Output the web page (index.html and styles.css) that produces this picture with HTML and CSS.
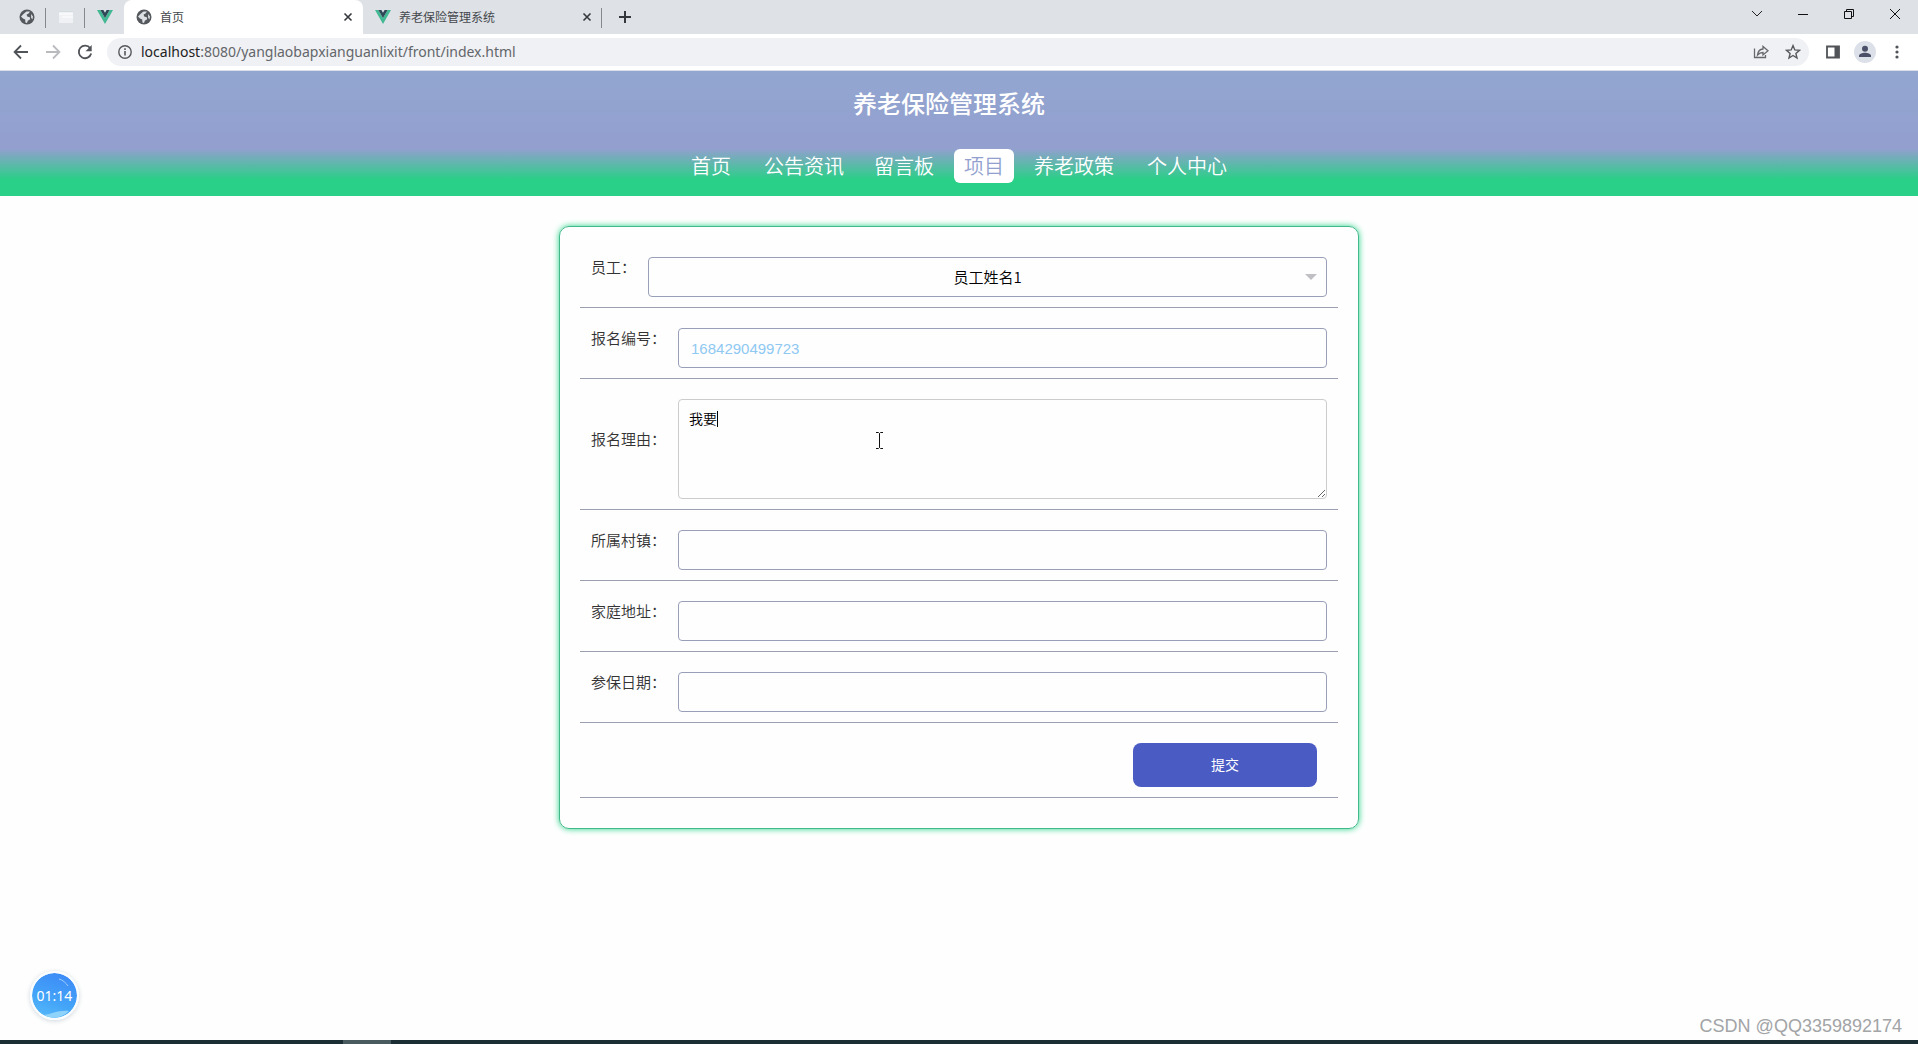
FILE: index.html
```html
<!DOCTYPE html>
<html lang="zh-CN">
<head>
<meta charset="utf-8">
<meta name="viewport" content="width=device-width, initial-scale=1">
<title>首页</title>
<link rel="stylesheet" href="styles.css">
</head>
<body>
<svg class="symbols" aria-hidden="true">
  <symbol id="globe" viewBox="0 0 16 16"><circle cx="8" cy="8" r="7.5" fill="#55585c"/><path d="M2 7.5 5 4.5 7.5 2.4 11 2.4 9.6 4.6 7.6 5.6 8.2 7.4 10.8 8.2 11.2 10.2 8.8 11.8 8 14 6.4 13.6 6.2 10.6 4 9.6Z" fill="#dee1e6"/><path d="m12 5 2 2.5-.6 3-1.2-1.8Z" fill="#dee1e6"/></symbol>
  <symbol id="vue" viewBox="0 0 16 16"><path d="M0 1h3.4L8 9l4.6-8H16L8 15Z" fill="#42b893"/><path d="M3.4 1H6.4L8 3.8 9.6 1h3L8 9Z" fill="#2f4858"/></symbol>
  <symbol id="cross" viewBox="0 0 10 10"><path d="m1.5 1.5 7 7m0-7-7 7" stroke="#34373b" stroke-width="1.6" fill="none"/></symbol>
</svg>

<header class="browser">
  <div class="tabstrip">
    <div class="pinned"><svg width="16" height="16"><use href="#globe"/></svg></div>
    <div class="pinned"><svg width="16" height="16" viewBox="0 0 16 16"><path d="M1 2h14v12H1z" fill="#eff1f4"/><path d="M1 5h14M4 8h11" stroke="#fff"/><path d="M1 2.500h14" stroke="#d3dcdf"/></svg></div>
    <div class="pinned last"><svg width="16" height="16"><use href="#vue"/></svg></div>
    <div class="tab active">
      <svg width="16" height="16"><use href="#globe"/></svg><span>首页</span>
      <button class="close" aria-label="关闭标签页"><svg width="10" height="10"><use href="#cross"/></svg></button>
    </div>
    <div class="tab">
      <svg width="16" height="16"><use href="#vue"/></svg><span>养老保险管理系统</span>
      <button class="close" aria-label="关闭标签页"><svg width="10" height="10"><use href="#cross"/></svg></button>
    </div>
    <button class="plus" aria-label="新标签页"><svg width="14" height="14"><path d="M7 1v12M1 7h12" stroke="#34373b" stroke-width="2"/></svg></button>
    <div class="window-controls">
      <button aria-label="搜索标签页"><svg width="12" height="12" fill="none" stroke="#222"><path d="m1 3 5 5 5-5"/></svg></button>
      <button aria-label="最小化"><svg width="12" height="12"><path d="M1 6.500h10" stroke="#111"/></svg></button>
      <button aria-label="还原"><svg width="12" height="12" fill="none" stroke="#111"><path d="M1.500 3.500h7v7h-7zM3.500 3.500v-2h7v7h-2"/></svg></button>
      <button aria-label="关闭"><svg width="12" height="12"><path d="m1 1 10 10M11 1 1 11" stroke="#111"/></svg></button>
    </div>
  </div>
  <div class="toolbar">
    <button class="tool" aria-label="后退"><svg width="16" height="16" fill="none" stroke="#505357" stroke-width="1.800"><path d="M15 8H2M8 1.500 1.600 8 8 14.500"/></svg></button>
    <button class="tool" aria-label="前进"><svg width="16" height="16" fill="none" stroke="#b9bbbe" stroke-width="1.800"><path d="M1 8h13M8 1.500 14.400 8 8 14.500"/></svg></button>
    <button class="tool" aria-label="刷新"><svg width="16" height="16"><path d="M13.200 4.200A6.300 6.300 0 1 0 14.200 9.500" fill="none" stroke="#505357" stroke-width="1.800"/><path d="M14.700 1v6.200H8.500Z" fill="#505357"/></svg></button>
    <div class="address">
      <svg width="16" height="16"><circle cx="8" cy="8" r="6.200" fill="none" stroke="#55585c" stroke-width="1.400"/><path d="M8 7v4.500M8 4.300v1.700" stroke="#55585c" stroke-width="1.600"/></svg>
      <span class="url"><b>localhost</b>:8080/yanglaobapxianguanlixit/front/index.html</span>
      <button class="tool" aria-label="分享"><svg width="16" height="16" fill="none" stroke="#65686c" stroke-width="1.300"><path d="M1.500 4.500v9h11v-2.500M4.500 11c.5-4 2.500-5.800 5.500-6V2.500l5 4.200-5 4.200V8.500C7.500 8.500 6 9.300 4.500 11Z"/></svg></button>
      <button class="tool" aria-label="收藏"><svg width="16" height="16" fill="none" stroke="#55585c" stroke-width="1.400"><path d="m8 1.600 1.800 4.300 4.700.4-3.600 3.100 1.100 4.600L8 11.500 4 14l1.100-4.600L1.500 6.300l4.700-.4Z"/></svg></button>
    </div>
    <button class="tool" aria-label="侧边栏"><svg width="16" height="16"><path d="M2 2.500h12v11H2z" fill="none" stroke="#505357" stroke-width="1.800"/><path d="M9.500 2.500H14v11H9.500z" fill="#505357"/></svg></button>
    <button class="tool" aria-label="用户"><svg width="22" height="22"><circle cx="11" cy="11" r="11" fill="#dce0e8"/><circle cx="11" cy="7.800" r="3" fill="#4b5068"/><path d="M5 16v-1.200c0-2 3.500-3 6-3s6 1 6 3V16Z" fill="#4b5068"/></svg></button>
    <button class="tool" aria-label="菜单"><svg width="4" height="14" fill="#505357"><circle cx="2" cy="2" r="1.600"/><circle cx="2" cy="7" r="1.600"/><circle cx="2" cy="12" r="1.600"/></svg></button>
  </div>
</header>

<header class="banner">
  <h1>养老保险管理系统</h1>
  <nav>
    <a href="#home">首页</a>
    <div class="nav-group">
      <a href="#news">公告资讯</a>
      <a href="#board">留言板</a>
      <a href="#projects" class="current">项目</a>
      <a href="#policy">养老政策</a>
    </div>
    <a href="#me">个人中心</a>
  </nav>
</header>

<main>
  <form class="card">
    <div class="row">
      <label for="staff">员工：</label>
      <div class="field select">
        <select id="staff"><option>员工姓名1</option></select>
      </div>
    </div>
    <div class="row">
      <label for="number">报名编号：</label>
      <input class="field" id="number" type="text" value="1684290499723">
    </div>
    <div class="row">
      <label for="reason">报名理由：</label>
      <div class="field note">
        <textarea id="reason">我要</textarea>
        <span class="caret"></span>
        <svg class="pointer" width="9" height="17" fill="none" stroke="#111"><path d="M1 .5h2.500l1 1 1-1H8M1 16.500h2.500l1-1 1 1H8M4.500 1.500v14"/></svg>
      </div>
    </div>
    <div class="row">
      <label for="town">所属村镇：</label>
      <input class="field" id="town" type="text">
    </div>
    <div class="row">
      <label for="home-address">家庭地址：</label>
      <input class="field" id="home-address" type="text">
    </div>
    <div class="row">
      <label for="date">参保日期：</label>
      <input class="field" id="date" type="text">
    </div>
    <div class="row actions">
      <button class="submit" type="button">提交</button>
    </div>
  </form>
</main>

<footer class="taskbar"><span></span></footer>

<div class="timer">
  <svg width="45" height="45" viewBox="0 0 45 45" aria-hidden="true"><path d="M12 42c8-1 14-5 25-4-7 7-16 9-25 4Z" fill="#8fd2fa"/><path d="M27 6c4 1 7 4 9 7" fill="none" stroke="#9ccdfc"/></svg>
  <span>01:14</span>
</div>
<div class="watermark">CSDN @QQ3359892174</div>
</body>
</html>
```
FILE: styles.css
```css
* { box-sizing: border-box; }

body {
  position: relative;
  display: flex;
  flex-direction: column;
  min-height: 100vh;
  margin: 0;
  background: #fefefe;
  color: #333;
  font-family: "Noto Sans CJK SC", sans-serif;
  font-size: 15px;
}

button {
  display: flex;
  align-items: center;
  justify-content: center;
  padding: 0;
  border: 0;
  background: none;
}

.symbols { display: none; }

/* Browser window */
.tabstrip {
  display: flex;
  height: 34px;
  padding-left: 7px;
  background: #dee1e6;
}

.pinned {
  position: relative;
  display: flex;
  align-items: center;
  justify-content: center;
  width: 39px;
}

.pinned::after,
.tab:not(.active)::after {
  content: "";
  position: absolute;
  top: 8px;
  right: 0;
  width: 1px;
  height: 20px;
  background: #85888c;
}

.pinned.last::after { display: none; }

.tab {
  position: relative;
  display: flex;
  align-items: center;
  gap: 8px;
  width: 239px;
  padding: 0 9px 0 12px;
  color: #45484c;
  font-size: 12px;
  line-height: 16px;
}

.tab.active {
  border-radius: 8px 8px 0 0;
  background: #fff;
}

.close { width: 12px; height: 16px; margin-left: auto; }
.plus { width: 46px; }

.window-controls { display: flex; height: 28px; margin-left: auto; }
.window-controls button { width: 46px; }

.toolbar {
  display: flex;
  align-items: center;
  height: 37px;
  padding: 0 5px;
  border-bottom: 1px solid #dadce6;
  background: #fff;
}

.tool { width: 32px; height: 28px; }

.address {
  display: flex;
  flex: 1;
  align-items: center;
  height: 28px;
  margin: 0 8px 0 6px;
  padding-left: 10px;
  border-radius: 14px;
  background: #f0f1f4;
}

.url {
  flex: 1;
  margin-left: 8px;
  color: #63666a;
  font-family: "Noto Sans", sans-serif;
  font-size: 14px;
  line-height: 18px;
}

.url b { color: #222; font-weight: 400; }

/* Site banner */
.banner {
  display: flex;
  flex-direction: column;
  align-items: center;
  height: 125px;
  background: linear-gradient(#92a6d0 0%, #939fcf 62%, #29d087 87%);
  color: #fff;
}

h1 {
  margin: 14px 0 28px;
  padding-right: 20px;
  font-size: 24px;
  font-weight: 500;
  line-height: 36px;
}

nav { display: flex; gap: 13px; }
.nav-group { display: flex; gap: 10px; }

nav a {
  padding: 0 10px;
  border-radius: 6px;
  color: #fff;
  font-size: 20px;
  font-weight: 350;
  line-height: 34px;
  text-decoration: none;
}

nav .current { background: #fff; color: #929fcf; }

/* Application form */
main { flex: 1; padding: 30px 16px; }

.card {
  max-width: 800px;
  margin: 0 auto;
  padding: 20px;
  border: 1px solid #42b98a;
  border-radius: 10px;
  box-shadow: 0 0 6px #26d488;
}

.row {
  display: flex;
  align-items: center;
  margin-bottom: 10px;
  padding: 10px 11px;
  border-bottom: 1px solid #9a9fb2;
}

.row label {
  padding: 0 12px 20px 0;
  font-weight: 350;
  line-height: 20px;
}

.field {
  flex: 1;
  min-width: 0;
  height: 40px;
  border: 1px solid #9a9fb8;
  border-radius: 4px;
  background: transparent;
}

input.field {
  padding: 0 12px;
  color: #8fc9f2;
  font-family: "Liberation Sans", sans-serif;
  font-size: 15px;
}

.select { position: relative; }

.select select {
  width: 100%;
  height: 100%;
  padding: 0 0 2px;
  border: 0;
  appearance: none;
  background: transparent;
  color: #000;
  font: 350 15px "Noto Sans CJK SC", sans-serif;
  text-align-last: center;
}

.select::after {
  content: "";
  position: absolute;
  top: 16px;
  right: 9px;
  border: 6px solid transparent;
  border-top-color: #c0c0c4;
  border-bottom: 0;
  pointer-events: none;
}

.note {
  position: relative;
  height: 100px;
  border: 0;
}

textarea {
  display: block;
  width: 100%;
  height: 100%;
  padding: 7px 10px;
  border: 1px solid #ccc;
  border-radius: 4px;
  background: transparent;
  color: #000;
  font: 350 14px/22px "Noto Sans CJK SC", sans-serif;
}

.caret {
  position: absolute;
  top: 12px;
  left: 39px;
  width: 1px;
  height: 16px;
  background: #000;
}

.pointer { position: absolute; top: 33px; left: 197px; }

.actions { justify-content: flex-end; }

.submit {
  width: 184px;
  height: 44px;
  margin-right: 10px;
  padding-bottom: 2px;
  border-radius: 8px;
  background: #4a5bc4;
  color: #fff;
  font-family: inherit;
  font-size: 14px;
}

/* Desktop overlays */
.taskbar { height: 4px; background: #1b2e33; }

.taskbar span {
  display: block;
  width: 48px;
  height: 4px;
  margin-left: 343px;
  background: #4a5b60;
}

.timer {
  position: absolute;
  bottom: 24px;
  left: 30px;
  display: grid;
  place-items: center;
  width: 49px;
  height: 49px;
  border: 2px solid #fafdff;
  border-radius: 50%;
  background: linear-gradient(200deg, #3c86f6, #43a4f8 60%, #5abcf9) padding-box;
  box-shadow: 0 1px 5px #d0d6dc;
  color: #fff;
  font: 14px "Noto Sans", sans-serif;
}

.timer svg,
.timer span { grid-area: 1 / 1; }

.watermark {
  position: absolute;
  right: 16px;
  bottom: 8px;
  color: #a2a4a6;
  font: 18px/20px "Liberation Sans", sans-serif;
}
```
